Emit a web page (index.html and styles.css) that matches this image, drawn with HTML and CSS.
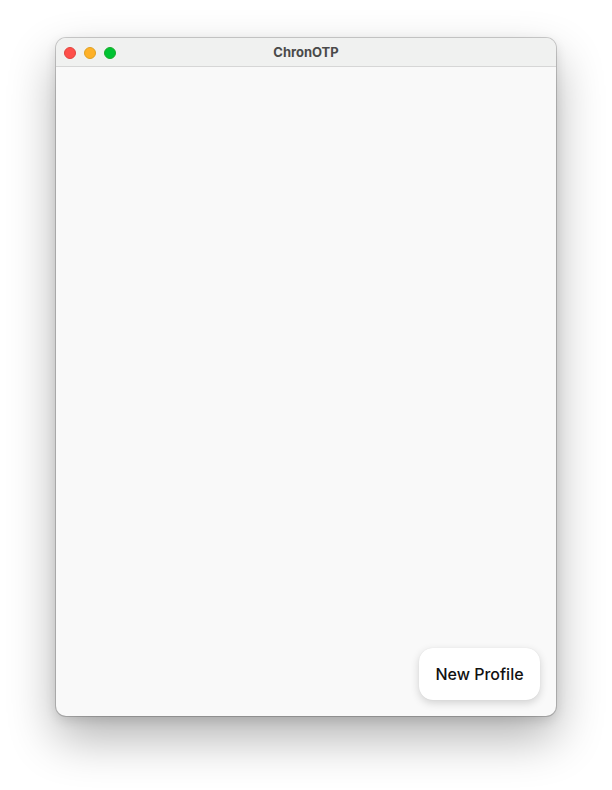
FILE: index.html
```html
<!DOCTYPE html>
<html>
<head>
<meta charset="utf-8">
<link rel="stylesheet" href="styles.css">
</head>
<body>
<div class="stage">
  <div class="window">
    <div class="titlebar">
      <div class="lights">
        <span class="light red"></span>
        <span class="light yellow"></span>
        <span class="light green"></span>
      </div>
      <div class="title">ChronOTP</div>
    </div>
    <div class="content">
      <button class="new-btn">New Profile</button>
    </div>
  </div>
</div>
</body>
</html>
```
FILE: styles.css
```css
html, body {
  margin: 0;
  padding: 0;
  background: #ffffff;
}
.stage {
  width: 612px;
  height: 790px;
  padding: 38px 0 0 56px;
  box-sizing: border-box;
}
.window {
  width: 500px;
  height: 678px;
  border-radius: 10px;
  overflow: hidden;
  background: #f9f9f9;
  box-shadow: 0 0 0 1px rgba(0,0,0,0.18), 0 22px 48px rgba(0,0,0,0.30), 0 4px 12px rgba(0,0,0,0.12);
  display: flex;
  flex-direction: column;
}
.titlebar {
  height: 29px;
  flex: none;
  background: #f0f1f0;
  border-bottom: 1px solid #d6d6d6;
  box-sizing: border-box;
  position: relative;
  display: flex;
  align-items: center;
}
.lights {
  display: flex;
  gap: 8px;
  padding-left: 8px;
  padding-top: 1px;
}
.light {
  width: 12px;
  height: 12px;
  border-radius: 50%;
  box-sizing: border-box;
}
.red { background: #fe4f4a; border: 0.5px solid #e0443e; }
.yellow { background: #feb128; border: 0.5px solid #dea123; }
.green { background: #00c333; border: 0.5px solid #1aab29; }
.title {
  position: absolute;
  left: 0;
  right: 0;
  text-align: center;
  font-family: "Inter", "Liberation Sans", sans-serif;
  font-weight: 700;
  font-size: 13px;
  color: #4a4a4a;
  line-height: 28px;
}
.content {
  flex: 1;
  display: flex;
  align-items: flex-end;
  justify-content: flex-end;
  padding: 0 16px 16px 0;
}
.new-btn {
  width: 121px;
  height: 52px;
  border: none;
  border-radius: 14px;
  background: #ffffff;
  box-shadow: 0 3px 8px rgba(0,0,0,0.16), 0 0 1px rgba(0,0,0,0.1);
  font-family: "Inter", "Liberation Sans", sans-serif;
  font-weight: 500;
  font-size: 16px;
  color: #111111;
  padding: 0;
}
```
